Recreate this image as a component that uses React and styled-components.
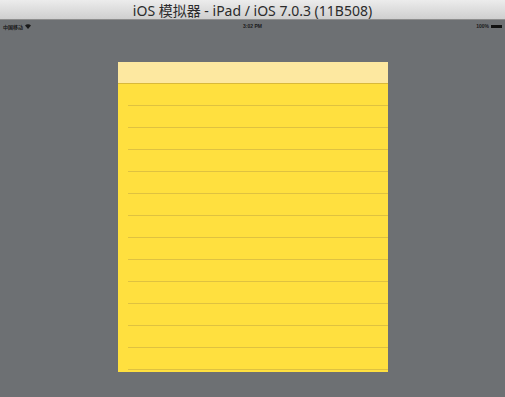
import React from 'react'
import styled, { createGlobalStyle } from 'styled-components'

const Global = createGlobalStyle`
  html, body { margin: 0; padding: 0; }
  body {
    width: 505px;
    height: 397px;
    overflow: hidden;
    background: #6d7073;
    font-family: "Liberation Sans", "Noto Sans CJK SC", sans-serif;
  }
`

const Window = styled.div`
  width: 505px;
  height: 397px;
  display: flex;
  flex-direction: column;
  background: #6d7073;
`

const TitleBar = styled.div`
  height: 19px;
  flex-shrink: 0;
  display: flex;
  align-items: center;
  justify-content: center;
  background: linear-gradient(#ececec, #cfcfcf);
  border-bottom: 1px solid #8d8d8d;
  color: #2b2b2b;
  font-family: "Noto Sans", "Noto Sans CJK SC", sans-serif;
  font-size: 14px;
`

const StatusBar = styled.div`
  height: 12px;
  flex-shrink: 0;
  display: grid;
  grid-template-columns: 1fr auto 1fr;
  align-items: center;
  padding: 0 3px;
  color: #1a1a1a;
  font-size: 5px;
  font-weight: bold;
`

const Carrier = styled.span`
  display: flex;
  align-items: center;
  gap: 2px;
`

const Battery = styled.span`
  display: flex;
  align-items: center;
  justify-content: flex-end;
  gap: 2px;
`

const BatteryBar = styled.span`
  width: 11px;
  height: 3px;
  background: #111;
`

const Stage = styled.div`
  flex: 1;
  display: flex;
  justify-content: center;
  padding-top: 30px;
`

const Paper = styled.div`
  width: 270px;
  height: 310px;
  margin-left: 1px;
  background: #ffe03f;
  display: flex;
  flex-direction: column;
  overflow: hidden;
`

const PaperHeader = styled.div`
  height: 21px;
  flex-shrink: 0;
  background: #fde8a0;
  border-bottom: 1px solid #d9b93a;
`

const Line = styled.div`
  height: 22px;
  flex-shrink: 0;
  margin-left: 10px;
  border-bottom: 1px solid #dfc240;
  box-sizing: border-box;
`

export default function App() {
  return (
    <Window>
      <Global />
      <TitleBar>iOS 模拟器 - iPad / iOS 7.0.3 (11B508)</TitleBar>
      <StatusBar>
        <Carrier>
          中国移动
          <svg width="6" height="5" viewBox="0 0 6 5">
            <path d="M0 1.5 A4 4 0 0 1 6 1.5 L3 5 Z" fill="#1a1a1a" />
          </svg>
        </Carrier>
        <span>3:02 PM</span>
        <Battery>
          100%
          <BatteryBar />
        </Battery>
      </StatusBar>
      <Stage>
        <Paper>
          <PaperHeader />
          {Array.from({ length: 13 }).map((_, i) => (
            <Line key={i} />
          ))}
        </Paper>
      </Stage>
    </Window>
  )
}
